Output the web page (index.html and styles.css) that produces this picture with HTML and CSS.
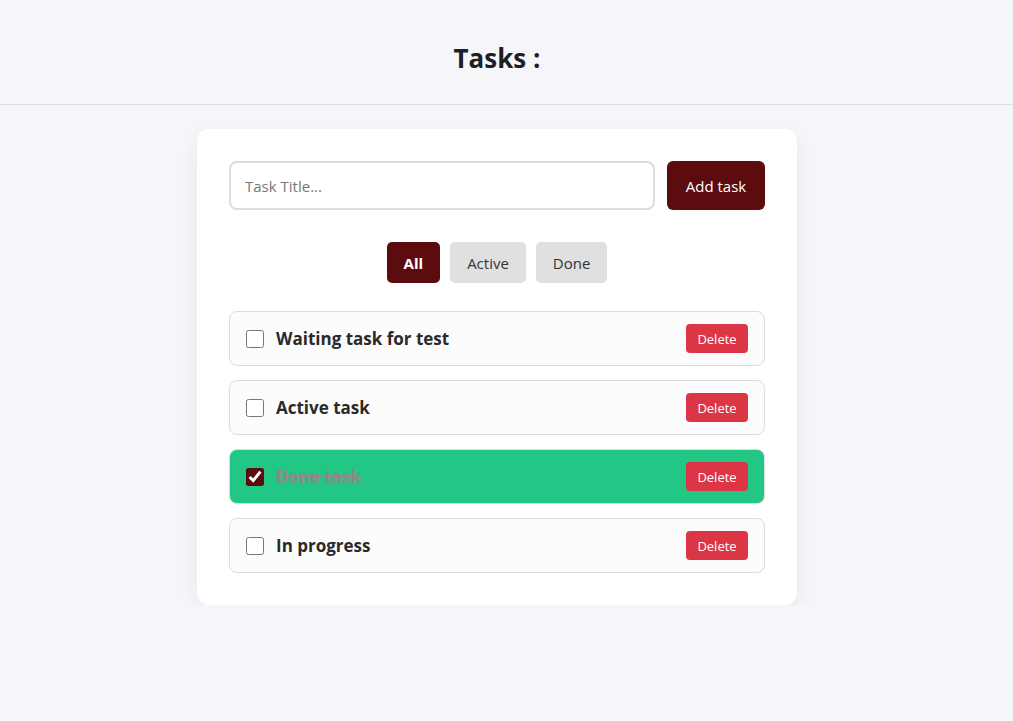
FILE: index.html
```html
<!DOCTYPE html>
<html>
<head>
<meta charset="utf-8">
<link rel="stylesheet" href="styles.css">
</head>
<body>
<header class="header"><h1 class="title">Tasks :</h1></header>
<div class="page">
<main class="card">
  <form class="add-row" onsubmit="return false">
    <input class="task-input" type="text" placeholder="Task Title...">
    <button class="add-btn" type="button">Add task</button>
  </form>
  <div class="filters">
    <button class="filter active-filter">All</button>
    <button class="filter">Active</button>
    <button class="filter">Done</button>
  </div>
  <ul class="list">
    <li class="item"><input type="checkbox" class="check"><span class="label">Waiting task for test</span><button class="del">Delete</button></li>
    <li class="item"><input type="checkbox" class="check"><span class="label">Active task</span><button class="del">Delete</button></li>
    <li class="item done"><input type="checkbox" class="check" checked><span class="label">Done task</span><button class="del">Delete</button></li>
    <li class="item"><input type="checkbox" class="check"><span class="label">In progress</span><button class="del">Delete</button></li>
  </ul>
</main>
</div>
</body>
</html>
```
FILE: styles.css
```css
* { box-sizing: border-box; }
body {
  margin: 0;
  background: #f5f6fa;
  font-family: "Open Sans", "Noto Sans", "Liberation Sans", sans-serif;
  color: #222;
}
.header {
  height: 105px;
  border-bottom: 1px solid #dcdde2;
  display: flex;
  align-items: center;
  justify-content: center;
  padding-right: 19px;
}
.title {
  margin: 0;
  font-size: 26px;
  font-weight: 700;
  color: #1f1f1f;
  padding-top: 12px;
}
.page {
  padding-right: 19px;
}
.card {
  width: 600px;
  margin: 24px auto 0;
  background: #fff;
  border-radius: 12px;
  padding: 32px;
  box-shadow: 0 6px 20px rgba(0,0,0,0.06);
}
.add-row {
  display: flex;
  gap: 12px;
  margin: 0;
}
.task-input {
  flex: 1;
  height: 49px;
  border: 2px solid #dcdcdc;
  border-radius: 8px;
  padding: 0 14px;
  font-family: inherit;
  font-size: 15px;
  color: #222;
  outline: none;
}
.task-input::placeholder { color: #777; }
.add-btn {
  width: 98px;
  height: 49px;
  border: none;
  border-radius: 6px;
  background: #5c0c0f;
  color: #fff;
  font-family: inherit;
  font-size: 15px;
}
.filters {
  display: flex;
  justify-content: center;
  gap: 10px;
  margin-top: 32px;
}
.filter {
  height: 41px;
  padding: 0 17px;
  border: none;
  border-radius: 5px;
  background: #e0e0e0;
  color: #333;
  font-family: inherit;
  font-size: 15px;
}
.active-filter {
  background: #5c0c0f;
  color: #fff;
  font-weight: 700;
}
.list {
  list-style: none;
  margin: 28px 0 0;
  padding: 0;
  display: flex;
  flex-direction: column;
  gap: 14px;
}
.item {
  height: 55px;
  display: flex;
  align-items: center;
  padding: 0 16px;
  border: 1px solid #dcdcdc;
  border-radius: 8px;
  background: #fcfcfc;
}
.check {
  width: 18px;
  height: 18px;
  margin: 0 12px 0 0;
  accent-color: #5c0c0f;
}
.label {
  flex: 1;
  font-size: 17px;
  font-weight: 700;
  color: #2a2a2a;
}
.done {
  background: #22c785;
}
.done .label {
  color: #8a8a8a;
  text-decoration: line-through;
}
.del {
  width: 62px;
  height: 29px;
  border: none;
  border-radius: 4px;
  background: #dc3545;
  color: #fff;
  font-family: inherit;
  font-size: 13px;
}
```
